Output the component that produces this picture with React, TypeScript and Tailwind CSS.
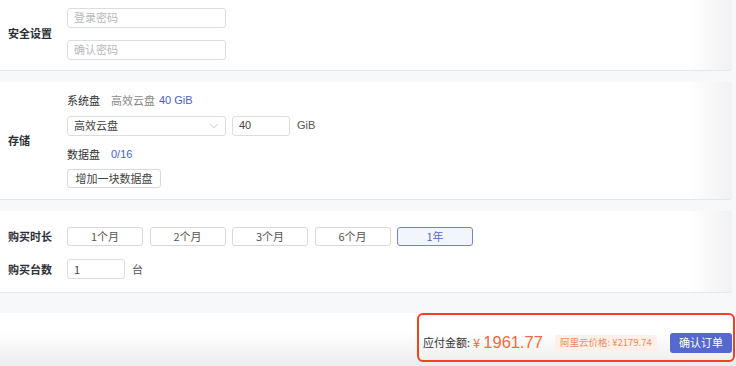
import { ChevronDown } from "lucide-react"

const durations = ["1个月", "2个月", "3个月", "6个月", "1年"]

function Field({ placeholder, value, className = "" }: { placeholder?: string; value?: string; className?: string }) {
  return (
    <div
      className={`h-[20px] rounded-[3px] border border-[#dcdde2] bg-white px-[6px] flex items-center text-[11px] ${
        value ? "text-[#444]" : "text-[#b8b9bd]"
      } ${className}`}
    >
      {value ?? placeholder}
    </div>
  )
}

function Card({ children, className = "" }: { children: React.ReactNode; className?: string }) {
  return (
    <section
      className={`mr-[4px] rounded-r-[3px] border-b border-[#e6e7eb] bg-[linear-gradient(to_right,#ffffff_94%,#f1f1f3)] flex ${className}`}
    >
      {children}
    </section>
  )
}

export default function App() {
  return (
    <div
      className="w-[736px] h-[366px] overflow-hidden bg-[#f7f8fa] text-[#333]"
      style={{ fontFamily: '"Noto Sans CJK SC", "Liberation Sans", sans-serif' }}
    >
      <Card className="h-[71px] items-center pb-[3px]">
        <div className="w-[67px] pl-[8px] text-[11px] font-bold text-[#2d2f36]">安全设置</div>
        <div className="flex flex-col gap-[12px]">
          <Field placeholder="登录密码" className="w-[159px]" />
          <Field placeholder="确认密码" className="w-[159px]" />
        </div>
      </Card>

      <div className="h-[11px]" />

      <Card className="h-[118px] items-center">
        <div className="w-[67px] pl-[8px] text-[11px] font-bold text-[#2d2f36]">存储</div>
        <div className="flex flex-col">
          <div className="flex items-center h-[14px] text-[11px]">
            <span className="text-[#333]">系统盘</span>
            <span className="ml-[11px] text-[#888]">高效云盘</span>
            <span className="ml-[4px] text-[#4a5fc6]" style={{ fontFamily: '"Liberation Sans", sans-serif' }}>
              40 GiB
            </span>
          </div>
          <div className="mt-[8px] flex items-center">
            <div className="w-[159px] h-[20px] rounded-[3px] border border-[#dcdde2] bg-white pl-[6px] pr-[4px] flex items-center justify-between text-[11px] text-[#444]">
              高效云盘
              <ChevronDown size={14} strokeWidth={1} className="text-[#aaa]" />
            </div>
            <div className="ml-[6px] w-[58px] h-[20px] rounded-[3px] border border-[#dcdde2] bg-white px-[6px] flex items-center text-[11px] text-[#444]" style={{ fontFamily: '"Liberation Sans", sans-serif' }}>
              40
            </div>
            <span className="ml-[7px] text-[11px] text-[#555]" style={{ fontFamily: '"Liberation Sans", sans-serif' }}>
              GiB
            </span>
          </div>
          <div className="mt-[12px] flex items-center h-[14px] text-[11px]">
            <span>数据盘</span>
            <span className="ml-[11px] text-[#4a5fc6]" style={{ fontFamily: '"Liberation Sans", sans-serif' }}>
              0/16
            </span>
          </div>
          <button className="mt-[7px] w-[94px] h-[19px] rounded-[3px] border border-[#d8d9de] bg-white text-[11px] text-[#444] flex items-center justify-center">
            增加一块数据盘
          </button>
        </div>
      </Card>

      <div className="h-[11px]" />

      <Card className="h-[82px] flex-col pt-[16px]">
        <div className="flex items-center">
          <div className="w-[67px] pl-[8px] text-[11px] font-bold text-[#2d2f36]">购买时长</div>
          <div className="flex gap-[6.5px]">
            {durations.map((d) => {
              const active = d === "1年"
              return (
                <button
                  key={d}
                  className={`w-[76px] h-[19px] rounded-[3px] border text-[11px] flex items-center justify-center ${
                    active
                      ? "border-[#7184d8] bg-[#f3f5fc] text-[#5668c8]"
                      : "border-[#d8d9de] bg-white text-[#555]"
                  }`}
                >
                  {d}
                </button>
              )
            })}
          </div>
        </div>
        <div className="mt-[13px] flex items-center">
          <div className="w-[67px] pl-[8px] text-[11px] font-bold text-[#2d2f36]">购买台数</div>
          <Field value="1" className="w-[58px] h-[19px]" />
          <span className="ml-[7px] text-[11px] text-[#555]">台</span>
        </div>
      </Card>

      <div className="h-[20px]" />

      <footer className="h-[53px] bg-[linear-gradient(to_bottom,#ffffff_35%,#ececee)] flex justify-end pr-[1px]">
        <div className="w-[318px] h-[49px] rounded-[6px] border-2 border-[#f0421f] flex items-center pl-[4px] pr-[1px] pt-[10px]">
          <span className="text-[11px] text-[#333]">应付金额:</span>
          <span className="ml-[3px] text-[13px] text-[#f26a3f]">¥</span>
          <span
            className="ml-[3px] text-[16.5px] text-[#f26a3f] leading-none"
            style={{ fontFamily: '"Liberation Sans", sans-serif' }}
          >
            1961.77
          </span>
          <span className="ml-[12px] h-[16px] px-[5px] rounded-[2px] bg-[#fdf0e8] text-[9.5px] text-[#f08a5d] flex items-center">
            阿里云价格: ¥2179.74
          </span>
          <button className="ml-auto w-[62px] h-[20px] rounded-[3px] bg-[#5468cf] text-white text-[11px] flex items-center justify-center">
            确认订单
          </button>
        </div>
      </footer>
    </div>
  )
}
